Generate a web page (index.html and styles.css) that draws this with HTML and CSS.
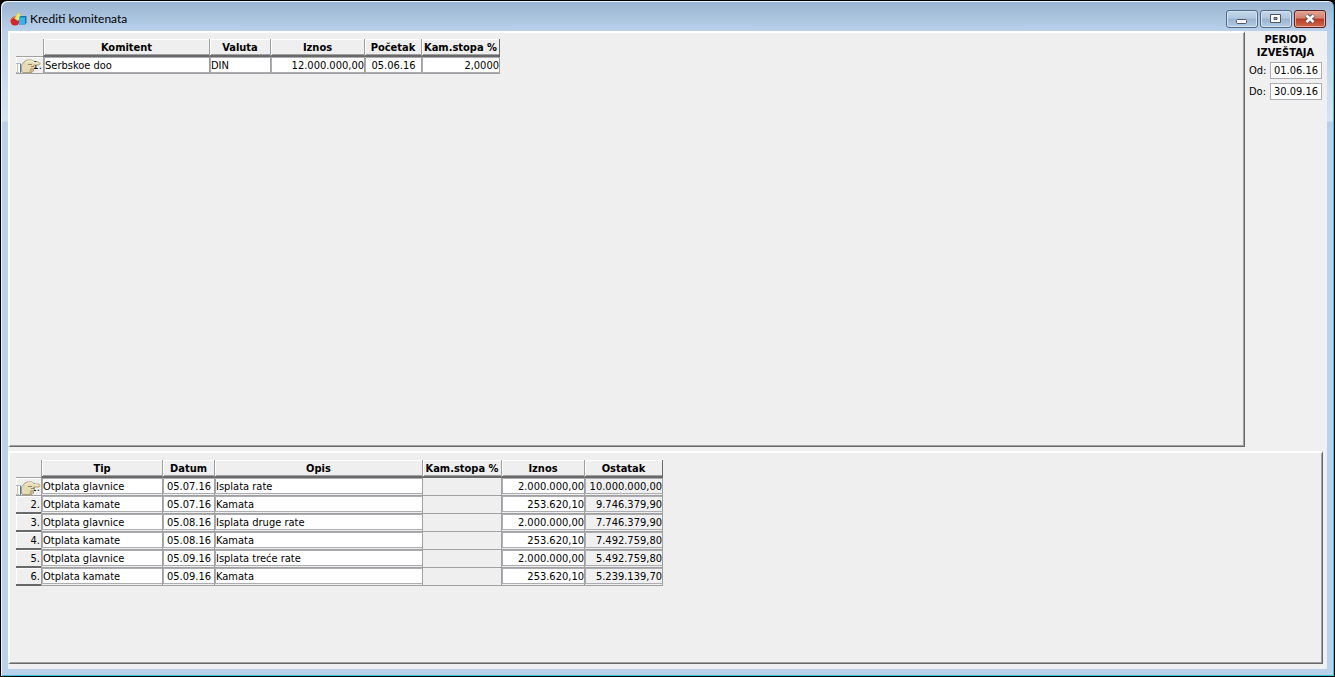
FILE: index.html
```html
<!DOCTYPE html>
<html lang="sr-Latn">
<head>
    <meta charset="UTF-8">
    <title>Krediti komitenata</title>
    <link rel="stylesheet" href="styles.css">
</head>
<body>
<svg class="defs" width="0" height="0">
    <symbol id="hand" viewBox="0 0 25 15">
        <path d="M0 6h5v9h-5z" fill="#f4f8ff"/>
        <path d="M0 5.500h4M0 14.500h3" stroke="#a9b8cc" fill="none"/>
        <path d="M1.500 6v9" stroke="#d9c48f"/>
        <path d="M4.500 5.500v9.500" stroke="#4c7fc4"/>
        <path d="M5.500 7l2.500-3 3-2h5l2.500 2h4l1.500 1.500-1 1.500h-5l-.5 1 1 1.500-1 1.500v2l-1.500 1.500h-9l-1.500-1z" fill="#e6dcb4" stroke="#a08b58" stroke-width=".8"/>
        <path d="M9 5l3-2h4l3 2h3" stroke="#fbf6dc" fill="none"/>
        <path d="M12 6.500h4M15 8.500h3M14 11h3M13.500 13h3" stroke="#85734b" stroke-width=".8" fill="none"/>
    </symbol>
</svg>
<div class="window">
    <div class="titlebar">
        <svg class="app-icon" width="17" height="16" viewBox="0 0 17 16">
            <circle cx="5" cy="10" r="4.500" fill="#d8232a"/>
            <path d="M1.500 8.500a4 4 0 0 1 3-2.500" stroke="#f58a80" fill="none"/>
            <path d="M8.500 1l4 7-5 1.500-3-2z" fill="#f0e95a" stroke="#c3bd3d" stroke-width=".5"/>
            <path d="M9 6.500l1.500-1.500h6v7l-1.500 1.500h-6z" fill="#1478b4"/>
            <path d="M9 6.500h6v6.500h-6z" fill="#35b5ea"/>
        </svg>
        <h1>Krediti komitenata</h1>
        <div class="win-buttons">
            <button type="button" aria-label="Minimize">
                <svg width="12" height="12" viewBox="0 0 12 12"><rect x=".5" y="6.500" width="10" height="4" rx="1" fill="#fff" stroke="#535666"/></svg>
            </button>
            <button type="button" aria-label="Maximize">
                <svg width="12" height="12" viewBox="0 0 12 12"><path d="M.5 1.500h10v8h-10z" fill="#fff" stroke="#535666"/><path d="M4 4.500h3v2h-3z" fill="#8ba6c6" stroke="#535666"/></svg>
            </button>
            <button type="button" class="close" aria-label="Close">
                <svg width="12" height="12" viewBox="0 0 12 12"><path d="M2.500 2.500l7 6.500M9.500 2.500l-7 6.500" stroke="#535666" stroke-width="4.500"/><path d="M2.500 2.500l7 6.500M9.500 2.500l-7 6.500" stroke="#fff" stroke-width="2.500"/></svg>
            </button>
        </div>
    </div>

    <div class="content">
        <div class="top">
            <div class="panel">
                <table class="grid loans">
                    <colgroup>
                        <col class="c-mark"><col class="c-client"><col class="c-currency"><col class="c-sum"><col class="c-start"><col class="c-rate">
                    </colgroup>
                    <thead>
                    <tr>
                        <td class="corner"></td>
                        <th>Komitent</th>
                        <th>Valuta</th>
                        <th>Iznos</th>
                        <th>Početak</th>
                        <th>Kam.stopa %</th>
                    </tr>
                    </thead>
                    <tbody>
                    <tr>
                        <th class="current">1.<svg class="hand" width="25" height="15"><use href="#hand"/></svg></th>
                        <td><div>Serbskoe doo</div></td>
                        <td><div>DIN</div></td>
                        <td class="num"><div>12.000.000,00</div></td>
                        <td class="date"><div>05.06.16</div></td>
                        <td class="num"><div>2,0000</div></td>
                    </tr>
                    </tbody>
                </table>
            </div>
            <form class="period">
                <h2>PERIOD IZVEŠTAJA</h2>
                <p><label for="od">Od:</label><input type="text" id="od" value="01.06.16"></p>
                <p><label for="do">Do:</label><input type="text" id="do" value="30.09.16"></p>
            </form>
        </div>

        <div class="panel bottom">
            <table class="grid payments">
                <colgroup>
                    <col class="c-mark"><col class="c-type"><col class="c-date"><col class="c-desc"><col class="c-rate"><col class="c-sum"><col class="c-rest">
                </colgroup>
                <thead>
                <tr>
                    <td class="corner"></td>
                    <th>Tip</th>
                    <th>Datum</th>
                    <th>Opis</th>
                    <th>Kam.stopa %</th>
                    <th>Iznos</th>
                    <th>Ostatak</th>
                </tr>
                </thead>
                <tbody>
                <tr>
                    <th class="current">1.<svg class="hand" width="25" height="15"><use href="#hand"/></svg></th>
                    <td><div>Otplata glavnice</div></td>
                    <td class="date"><div>05.07.16</div></td>
                    <td><div>Isplata rate</div></td>
                    <td class="empty"></td>
                    <td class="num"><div>2.000.000,00</div></td>
                    <td class="num locked"><div>10.000.000,00</div></td>
                </tr>
                <tr>
                    <th>2.</th>
                    <td><div>Otplata kamate</div></td>
                    <td class="date"><div>05.07.16</div></td>
                    <td><div>Kamata</div></td>
                    <td class="empty"></td>
                    <td class="num"><div>253.620,10</div></td>
                    <td class="num locked"><div>9.746.379,90</div></td>
                </tr>
                <tr>
                    <th>3.</th>
                    <td><div>Otplata glavnice</div></td>
                    <td class="date"><div>05.08.16</div></td>
                    <td><div>Isplata druge rate</div></td>
                    <td class="empty"></td>
                    <td class="num"><div>2.000.000,00</div></td>
                    <td class="num locked"><div>7.746.379,90</div></td>
                </tr>
                <tr>
                    <th>4.</th>
                    <td><div>Otplata kamate</div></td>
                    <td class="date"><div>05.08.16</div></td>
                    <td><div>Kamata</div></td>
                    <td class="empty"></td>
                    <td class="num"><div>253.620,10</div></td>
                    <td class="num locked"><div>7.492.759,80</div></td>
                </tr>
                <tr>
                    <th>5.</th>
                    <td><div>Otplata glavnice</div></td>
                    <td class="date"><div>05.09.16</div></td>
                    <td><div>Isplata treće rate</div></td>
                    <td class="empty"></td>
                    <td class="num"><div>2.000.000,00</div></td>
                    <td class="num locked"><div>5.492.759,80</div></td>
                </tr>
                <tr>
                    <th>6.</th>
                    <td><div>Otplata kamate</div></td>
                    <td class="date"><div>05.09.16</div></td>
                    <td><div>Kamata</div></td>
                    <td class="empty"></td>
                    <td class="num"><div>253.620,10</div></td>
                    <td class="num locked"><div>5.239.139,70</div></td>
                </tr>
                </tbody>
            </table>
        </div>
    </div>
</div>
</body>
</html>
```
FILE: styles.css
```css
* {
    margin: 0;
    padding: 0;
    box-sizing: border-box;
}

body {
    font: 11px/14px "DejaVu Sans Condensed", Tahoma, "DejaVu Sans", sans-serif;
    color: #000;
    background: #000;
}

.defs {
    position: absolute;
}

/* window frame */
.window {
    display: flex;
    flex-direction: column;
    min-height: 100vh;
    padding: 0 7px 7px 6px;
    border: 1px solid #000;
    border-radius: 7px 7px 0 0;
    background: linear-gradient(#99b4d1 0, #b9d1ea 30px, #d6e4f2 120px, #b9d1ea 121px);
    box-shadow: inset 1px 1px #eef6fc, inset -1px -1px #35c6dc;
}

.titlebar {
    display: flex;
    align-items: center;
    height: 30px;
    padding: 6px 1px 0 3px;
}

.titlebar h1 {
    flex: 1;
    margin-left: 3px;
    font: 12px/16px Lato, "Open Sans", sans-serif;
}

.win-buttons {
    display: flex;
    gap: 2px;
}

.win-buttons button {
    display: flex;
    align-items: center;
    justify-content: center;
    width: 32px;
    height: 18px;
    border: 1px solid #526984;
    border-radius: 3px;
    background: linear-gradient(#c3d5e9 0, #b2c8e0 45%, #98b3d1 50%, #b5cce5 100%);
    box-shadow: inset 0 0 0 1px #d5e3f2;
}

.win-buttons .close {
    border-color: #5b1f24;
    background: linear-gradient(#e3a493 0, #d3806b 45%, #ba3a22 50%, #d0694c 100%);
    box-shadow: inset 0 0 0 1px #e5aa9c;
}

.content {
    display: flex;
    flex: 1;
    flex-direction: column;
    margin-left: 1px;
    padding: 0 4px 5px 0;
    background: #f0f0f0;
}

.top {
    display: flex;
    flex: 1;
    margin-bottom: 4px;
}

.panel {
    flex: 1;
    padding: 6px;
    border: solid;
    border-width: 2px 1px 1px 2px;
    border-color: #fff #696969 #696969 #fff;
    box-shadow: inset -1px -1px #a0a0a0;
    background: #efefef;
}

.bottom {
    flex: 0 0 auto;
    min-height: 213px;
    padding-top: 7px;
}

/* grids */
.grid {
    table-layout: fixed;
    border-spacing: 0;
}

.loans {
    width: 484px;
}

.payments {
    width: 647px;
}

.loans .c-mark { width: 27px; }
.loans .c-client { width: 166px; }
.loans .c-currency { width: 61px; }
.loans .c-sum { width: 94px; }
.loans .c-start { width: 57px; }
.loans .c-rate { width: 79px; }

.payments .c-mark { width: 25px; }
.payments .c-type { width: 121px; }
.payments .c-date { width: 52px; }
.payments .c-desc { width: 208px; }
.payments .c-rate { width: 79px; }
.payments .c-sum { width: 83px; }
.payments .c-rest { width: 79px; }

.grid th,
.grid td {
    height: 18px;
    white-space: nowrap;
}

.grid thead th {
    padding-top: 1px;
    border-left: 1px solid #a0a0a0;
    border-bottom: 2px solid #696969;
    box-shadow: inset 1px 1px #fff, inset 0 -1px #a0a0a0;
}

.grid thead th:last-child {
    border-right: 1px solid #696969;
}

.grid thead .corner {
    border-bottom: 1px solid #a0a0a0;
}

.grid tbody th {
    position: relative;
    padding: 2px 1px 0 0;
    border-bottom: 2px solid #696969;
    box-shadow: inset 1px 1px #fff;
    font-weight: normal;
    text-align: right;
}

.grid tbody th.current {
    border-bottom: 1px solid #a0a0a0;
}

.hand {
    position: absolute;
    left: 0;
    bottom: 0;
}

.grid tbody td {
    padding-bottom: 1px;
    border-left: 1px solid #a0a0a0;
    border-bottom: 1px solid #a0a0a0;
}

.grid tbody td:last-child {
    border-right: 1px solid #a0a0a0;
}

.grid td div {
    height: 16px;
    border: 1px solid #abadb3;
    border-right: 0;
    background: #fff;
    line-height: 16px;
}

.grid .num {
    text-align: right;
}

.grid .date {
    text-align: center;
}

.grid .locked div {
    background: #f0f0f0;
}

.loans tbody th,
.loans tbody td {
    height: 17px;
    padding-bottom: 0;
}

/* report period */
.period {
    width: 78px;
    padding: 2px 1px 0 4px;
}

.period h2 {
    margin-bottom: 3px;
    font-size: 11px;
    line-height: 13px;
    text-align: center;
}

.period p {
    display: flex;
    align-items: center;
    justify-content: space-between;
    margin-bottom: 4px;
}

.period input {
    width: 52px;
    height: 17px;
    border: 1px solid #abadb3;
    background: #fff;
    font: inherit;
    text-align: center;
}
```
